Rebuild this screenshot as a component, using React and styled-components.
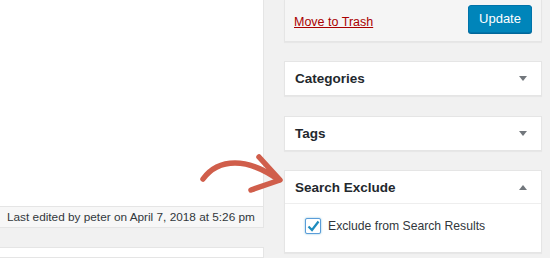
import React from 'react';
import styled, { createGlobalStyle } from 'styled-components';

const GlobalStyle = createGlobalStyle`
  html, body {
    margin: 0;
    padding: 0;
    background: #f1f1f1;
    font-family: "Liberation Sans", Arial, sans-serif;
    color: #23282d;
  }
`;

const Page = styled.div`
  position: relative;
  display: flex;
  width: 550px;
  height: 258px;
  overflow: hidden;
`;

const MainColumn = styled.div`
  width: 264px;
  display: flex;
  flex-direction: column;
`;

const Editor = styled.div`
  height: 206px;
  background: #fff;
  border-right: 1px solid #e5e5e5;
`;

const StatusBar = styled.div`
  height: 20px;
  background: #f7f7f7;
  border: 1px solid #e5e5e5;
  border-left: none;
  display: flex;
  align-items: center;
  padding-left: 7px;
  font-size: 11.8px;
  color: #32373c;
  white-space: nowrap;
`;

const NextPanel = styled.div`
  margin-top: 19px;
  flex: 1;
  background: #fff;
  border: 1px solid #e5e5e5;
  border-left: none;
`;

const Sidebar = styled.div`
  margin-left: 20px;
  width: 258px;
  display: flex;
  flex-direction: column;
`;

const Box = styled.div`
  background: #fff;
  border: 1px solid #e5e5e5;
  box-shadow: 0 1px 1px rgba(0, 0, 0, 0.04);
  margin-top: ${(p) => p.$gap || 0}px;
`;

const PublishActions = styled.div`
  height: 42px;
  background: #f5f5f5;
  border: 1px solid #e5e5e5;
  border-top: none;
  box-shadow: 0 1px 1px rgba(0, 0, 0, 0.04);
  display: flex;
  align-items: center;
  justify-content: space-between;
  padding: 0 9px 0 9px;
  box-sizing: border-box;
`;

const TrashLink = styled.a`
  font-size: 12.5px;
  color: #a00;
  text-decoration: underline;
  margin-top: 2px;
`;

const UpdateButton = styled.button`
  width: 64px;
  height: 28px;
  margin-top: -4px;
  background: #0085ba;
  border: 1px solid #0073aa;
  border-radius: 3px;
  box-shadow: 0 1px 0 #006799;
  color: #fff;
  font-family: inherit;
  font-size: 13px;
  padding: 0;
`;

const BoxHeader = styled.div`
  height: ${(p) => p.$h || 33}px;
  display: flex;
  align-items: center;
  justify-content: space-between;
  padding: 0 14px 0 10px;
  font-size: 13.5px;
  font-weight: 700;
  color: #23282d;
  border-bottom: ${(p) => (p.$open ? '1px solid #eee' : 'none')};
`;

const Toggle = styled.span`
  width: 0;
  height: 0;
  border-left: 4px solid transparent;
  border-right: 4px solid transparent;
  ${(p) =>
    p.$up
      ? 'border-bottom: 5px solid #72777c;'
      : 'border-top: 5px solid #72777c;'}
`;

const BoxBody = styled.div`
  height: 48px;
  box-sizing: border-box;
  display: flex;
  align-items: flex-start;
  padding: 14px 0 0 20px;
  gap: 7px;
  font-size: 12.2px;
  line-height: 16px;
  color: #32373c;
`;

const Check = styled.span`
  width: 14px;
  height: 14px;
  border: 1px solid #5b9dd9;
  border-radius: 2px;
  box-shadow: 0 0 2px rgba(30, 140, 190, 0.6);
  background: #fff;
  display: flex;
  align-items: center;
  justify-content: center;
`;

const Arrow = styled.svg`
  position: absolute;
  left: 195px;
  top: 148px;
`;

export default function App() {
  return (
    <Page>
      <GlobalStyle />
      <MainColumn>
        <Editor />
        <StatusBar>Last edited by peter on April 7, 2018 at 5:26 pm</StatusBar>
        <NextPanel />
      </MainColumn>
      <Sidebar>
        <PublishActions>
          <TrashLink>Move to Trash</TrashLink>
          <UpdateButton>Update</UpdateButton>
        </PublishActions>
        <Box $gap={19}>
          <BoxHeader>
            Categories <Toggle />
          </BoxHeader>
        </Box>
        <Box $gap={20}>
          <BoxHeader>
            Tags <Toggle />
          </BoxHeader>
        </Box>
        <Box $gap={19}>
          <BoxHeader $open $h={32}>
            Search Exclude <Toggle $up />
          </BoxHeader>
          <BoxBody>
            <Check>
              <svg width="13" height="12" viewBox="0 0 13 12">
                <path d="M1.5 6.5 L5 10 L11.5 1.5" fill="none" stroke="#1e8cbe" strokeWidth="2.2" />
              </svg>
            </Check>
            Exclude from Search Results
          </BoxBody>
        </Box>
      </Sidebar>
      <Arrow width="95" height="50" viewBox="0 0 95 50">
        <g fill="none" stroke="#d05e4b" strokeWidth="5.5" strokeLinecap="round" strokeLinejoin="round">
          <path d="M8 31 C 16 20, 26 15, 40 15 C 55 15, 70 22, 84 32" />
          <path d="M64 9 L 85 32 L 56 42" />
        </g>
      </Arrow>
    </Page>
  );
}
